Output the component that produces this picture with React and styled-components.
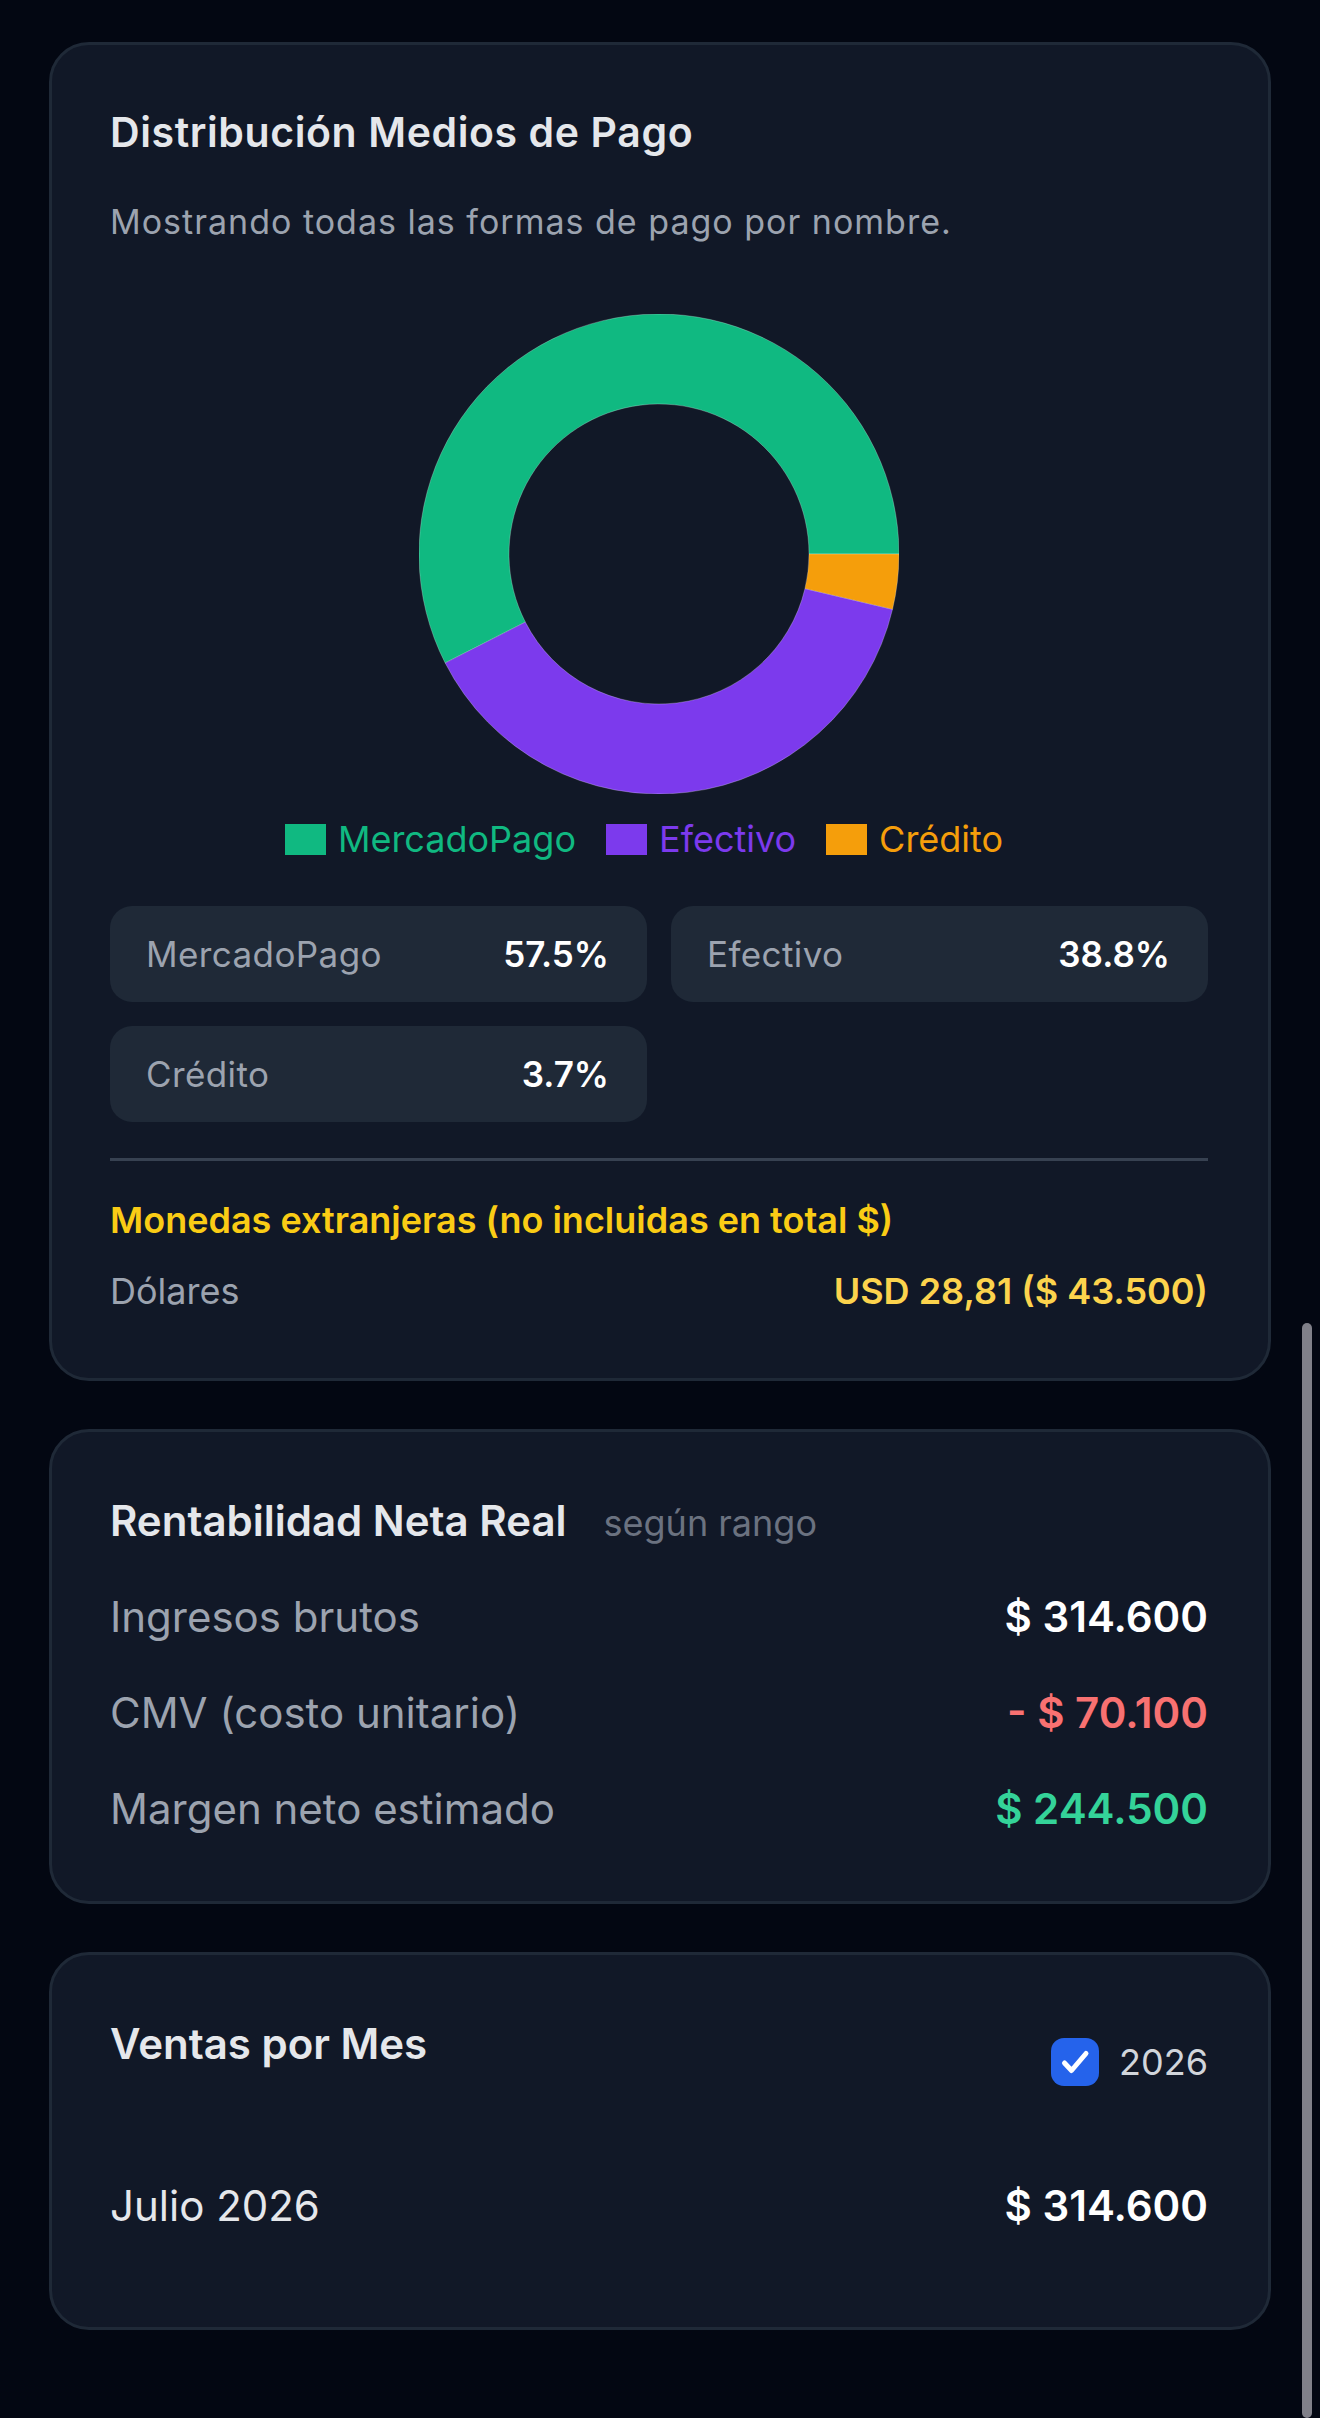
import React from 'react';
import styled, { createGlobalStyle } from 'styled-components';

const GlobalStyle = createGlobalStyle`
  html, body {
    margin: 0;
    padding: 0;
    background: #030712;
  }
  body {
    font-family: Inter, "Noto Sans", sans-serif;
    -webkit-font-smoothing: antialiased;
  }
`;

const medios = [
    { name: 'MercadoPago', pct: 57.5, color: '#10b981' },
    { name: 'Efectivo', pct: 38.8, color: '#7c3aed' },
    { name: 'Crédito', pct: 3.7, color: '#f59e0b' },
];

// arco de dona, angulos en grados, sentido antihorario (como recharts)
function arcPath(cx, cy, R, r, a0, a1) {
    const rad = (d) => (d * Math.PI) / 180;
    const p = (rr, a) => [cx + rr * Math.cos(rad(a)), cy - rr * Math.sin(rad(a))];
    const [x0, y0] = p(R, a0);
    const [x1, y1] = p(R, a1);
    const [x2, y2] = p(r, a1);
    const [x3, y3] = p(r, a0);
    const large = a1 - a0 > 180 ? 1 : 0;
    return `M${x0},${y0} A${R},${R} 0 ${large} 0 ${x1},${y1} L${x2},${y2} A${r},${r} 0 ${large} 1 ${x3},${y3} Z`;
}

function Donut() {
    let start = 0;
    return (
        <ChartBox>
            <svg width="480" height="480" viewBox="0 0 480 480">
                {medios.map((m) => {
                    const end = start + (m.pct / 100) * 360;
                    const d = arcPath(240, 240, 240, 150, start, end);
                    start = end;
                    return (
                        <path
                            key={m.name}
                            d={d}
                            fill={m.color}
                            stroke="#ffffff"
                            strokeOpacity="0.25"
                            strokeWidth="1"
                        />
                    );
                })}
            </svg>
        </ChartBox>
    );
}

function App() {
    return (
        <Page>
            <GlobalStyle />
            <Card $pb={64}>
                <CardTitle>Distribución Medios de Pago</CardTitle>
                <Subtitle>Mostrando todas las formas de pago por nombre.</Subtitle>
                <Donut />
                <Legend>
                    {medios.map((m) => (
                        <LegendItem key={m.name} $color={m.color}>
                            <LegendIcon $color={m.color} />
                            {m.name}
                        </LegendItem>
                    ))}
                </Legend>
                <StatGrid>
                    {medios.map((m) => (
                        <StatBox key={m.name}>
                            <StatLabel>{m.name}</StatLabel>
                            <StatValue>{m.pct}%</StatValue>
                        </StatBox>
                    ))}
                </StatGrid>
                <Divider />
                <ForeignTitle>Monedas extranjeras (no incluidas en total $)</ForeignTitle>
                <ForeignRow>
                    <ForeignLabel>Dólares</ForeignLabel>
                    <ForeignValue>USD 28,81 ($ 43.500)</ForeignValue>
                </ForeignRow>
            </Card>

            <Card $pb={67}>
                <TitleRow>
                    <BigTitle>Rentabilidad Neta Real</BigTitle>
                    <Muted>según rango</Muted>
                </TitleRow>
                <Rows>
                    <Row>
                        <RowLabel>Ingresos brutos</RowLabel>
                        <RowValue>$ 314.600</RowValue>
                    </Row>
                    <Row>
                        <RowLabel>CMV (costo unitario)</RowLabel>
                        <RowValue $color="#f87171">- $ 70.100</RowValue>
                    </Row>
                    <Row>
                        <RowLabel>Margen neto estimado</RowLabel>
                        <RowValue $color="#34d399">$ 244.500</RowValue>
                    </Row>
                </Rows>
            </Card>

            <Card $pb={67}>
                <Header>
                    <BigTitle>Ventas por Mes</BigTitle>
                    <YearToggle>
                        <Check>
                            <svg width="48" height="48" viewBox="0 0 48 48" fill="none">
                                <path
                                    d="M13.5 25l7 7.5L35 15.5"
                                    stroke="#fff"
                                    strokeWidth="5"
                                    strokeLinecap="round"
                                    strokeLinejoin="round"
                                />
                            </svg>
                        </Check>
                        2026
                    </YearToggle>
                </Header>
                <MonthList>
                    <Row>
                        <MonthLabel>Julio 2026</MonthLabel>
                        <RowValue>$ 314.600</RowValue>
                    </Row>
                </MonthList>
            </Card>
            <ScrollThumb />
        </Page>
    );
}

const Page = styled.main`
    display: flex;
    flex-direction: column;
    gap: 48px;
    padding: 42px 49px 91px;
    min-height: 2418px;
    box-sizing: border-box;
`;

const Card = styled.section`
    display: flex;
    flex-direction: column;
    background: #111827;
    border: 3px solid #1f2937;
    border-radius: 40px;
    padding: 64px 60px ${(p) => p.$pb}px 58px;
`;

const CardTitle = styled.h2`
    margin: 0;
    font-size: 41px;
    line-height: 46px;
    font-weight: 600;
    letter-spacing: 0.6px;
    color: #e5e7eb;
`;

const Subtitle = styled.p`
    margin: 45px 0 0;
    font-size: 34px;
    line-height: 44px;
    letter-spacing: 1px;
    color: #9ca3af;
`;

const ChartBox = styled.div`
    margin-top: 70px;
    height: 480px;
    display: flex;
    justify-content: center;
`;

const Legend = styled.div`
    margin-top: 23px;
    display: flex;
    justify-content: center;
    align-items: center;
`;

const LegendItem = styled.span`
    display: inline-flex;
    align-items: center;
    margin-right: 30px;
    font-size: 36px;
    line-height: 44px;
    color: ${(p) => p.$color};
`;

const LegendIcon = styled.span`
    width: 41px;
    height: 31px;
    margin-right: 12px;
    background: ${(p) => p.$color};
`;

const StatGrid = styled.div`
    margin-top: 45px;
    display: grid;
    grid-template-columns: 1fr 1fr;
    gap: 24px;
`;

const StatBox = styled.div`
    height: 96px;
    display: flex;
    align-items: center;
    justify-content: space-between;
    padding: 0 38px 0 36px;
    background: #1f2937;
    border-radius: 22px;
`;

const StatLabel = styled.span`
    font-size: 35px;
    letter-spacing: 0.4px;
    color: #9ca3af;
`;

const StatValue = styled.span`
    font-size: 35px;
    font-weight: 600;
    color: #ffffff;
`;

const Divider = styled.hr`
    margin: 36px 0 0;
    border: 0;
    height: 3px;
    background: #374151;
`;

const ForeignTitle = styled.div`
    margin-top: 36px;
    font-size: 36px;
    line-height: 46px;
    font-weight: 600;
    color: #facc15;
`;

const ForeignRow = styled.div`
    margin-top: 25px;
    display: flex;
    justify-content: space-between;
    align-items: center;
    line-height: 46px;
`;

const ForeignLabel = styled.span`
    font-size: 36px;
    color: #9ca3af;
`;

const ForeignValue = styled.span`
    font-size: 36px;
    font-weight: 600;
    color: #fcd34d;
`;

const TitleRow = styled.div`
    display: flex;
    align-items: baseline;
    gap: 37px;
`;

const BigTitle = styled.h2`
    margin: 0;
    font-size: 42px;
    line-height: 50px;
    font-weight: 600;
    color: #e5e7eb;
`;

const Muted = styled.span`
    font-size: 36px;
    color: #6b7280;
`;

const Rows = styled.div`
    margin-top: 46px;
    display: flex;
    flex-direction: column;
    gap: 46px;
`;

const Row = styled.div`
    display: flex;
    justify-content: space-between;
    align-items: center;
    line-height: 50px;
`;

const RowLabel = styled.span`
    font-size: 42px;
    color: #9ca3af;
`;

const RowValue = styled.span`
    font-size: 42px;
    font-weight: 600;
    color: ${(p) => p.$color || '#ffffff'};
`;

const Header = styled.div`
    display: flex;
    justify-content: space-between;
    align-items: flex-start;
`;

const YearToggle = styled.label`
    margin-top: 19px;
    display: flex;
    align-items: center;
    gap: 20px;
    font-size: 36px;
    color: #d1d5db;
`;

const Check = styled.span`
    width: 48px;
    height: 48px;
    border-radius: 13px;
    background: #2563eb;
    display: flex;
    align-items: center;
    justify-content: center;
`;

const MonthList = styled.div`
    margin-top: 95px;
    padding-bottom: 29px;
`;

const MonthLabel = styled.span`
    font-size: 42px;
    color: #e5e7eb;
`;

const ScrollThumb = styled.div`
    position: fixed;
    right: 8px;
    top: 1323px;
    bottom: 0;
    width: 10px;
    border-radius: 5px;
    background: #808089;
`;

export default App;
